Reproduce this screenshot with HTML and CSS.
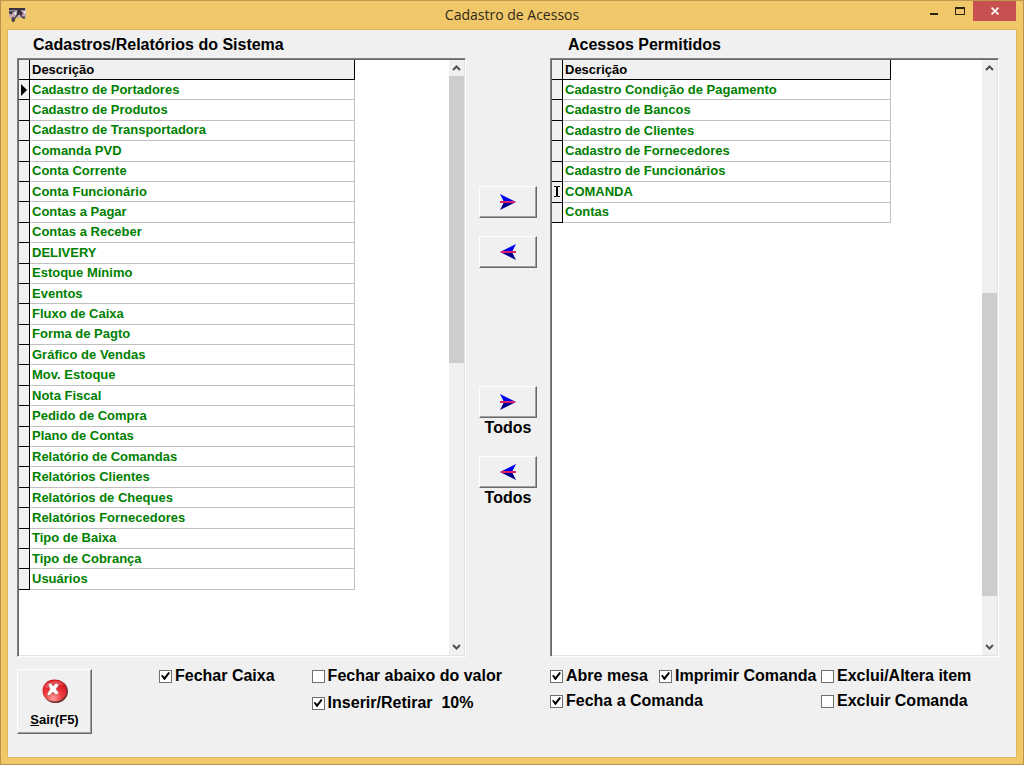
FILE: index.html
```html
<!DOCTYPE html>
<html lang="pt-BR">
<head>
<meta charset="utf-8">
<meta name="viewport" content="width=device-width, initial-scale=1">
<title>Cadastro de Acessos</title>
<link rel="stylesheet" href="styles.css">
</head>
<body>
<div class="window">
  <header class="titlebar">
    <svg class="app-icon" viewBox="0 0 16 13" aria-hidden="true">
      <path fill="#b9adb0" d="M0 0h16v9H0z"/>
      <path fill="#3c3040" d="M0 0h15v2H0zM0 3h5v1H3v2H1V5H0zM8 2h3l2 3 1 4h-2l-2-3-2 1-2 3H5l2-4z"/>
      <path fill="#d9a3b0" d="M1 6h3v3H1zM12 6h3v2h-3z"/>
      <path fill="#e9edf4" d="M5 4h2v2H5zM14 3h2v2h-2z"/>
      <path fill="#4b4348" d="M2 10l2-2 2 2-1 3H3zM13 8h2v2h-2z"/>
    </svg>
    <h1 class="title">Cadastro de Acessos</h1>
    <div class="window-buttons">
      <button class="win-btn" type="button" aria-label="Minimizar"><svg width="8" height="12" viewBox="0 0 8 12"><path fill="#2b210f" d="M0 8h8v2H0z"/></svg></button>
      <button class="win-btn" type="button" aria-label="Maximizar"><svg width="10" height="12" viewBox="0 0 10 12"><path fill="#2b210f" fill-rule="evenodd" d="M0 2h10v8H0zM1 4v5h8V4z"/></svg></button>
      <button class="win-btn close" type="button" aria-label="Fechar"><svg width="8" height="8" viewBox="0 0 8 8"><path stroke="#fff" stroke-width="1.7" d="M.6.6l6.8 6.8M7.4.6L.6 7.4"/></svg></button>
    </div>
  </header>

  <main class="content">
    <h2 class="heading">Cadastros/Relatórios do Sistema</h2>
    <h2 class="heading heading-right">Acessos Permitidos</h2>

    <section class="panel">
      <div class="list">
        <table class="grid grid-long">
          <thead><tr><th class="mark"></th><th scope="col">Descrição</th></tr></thead>
          <tbody>
            <tr><td class="mark"><svg width="6" height="12" viewBox="0 0 6 12"><path d="M0 0l6 6-6 6z"/></svg></td><td>Cadastro de Portadores</td></tr>
            <tr><td class="mark"></td><td>Cadastro de Produtos</td></tr>
            <tr><td class="mark"></td><td>Cadastro de Transportadora</td></tr>
            <tr><td class="mark"></td><td>Comanda PVD</td></tr>
            <tr><td class="mark"></td><td>Conta Corrente</td></tr>
            <tr><td class="mark"></td><td>Conta Funcionário</td></tr>
            <tr><td class="mark"></td><td>Contas a Pagar</td></tr>
            <tr><td class="mark"></td><td>Contas a Receber</td></tr>
            <tr><td class="mark"></td><td>DELIVERY</td></tr>
            <tr><td class="mark"></td><td>Estoque Mínimo</td></tr>
            <tr><td class="mark"></td><td>Eventos</td></tr>
            <tr><td class="mark"></td><td>Fluxo de Caixa</td></tr>
            <tr><td class="mark"></td><td>Forma de Pagto</td></tr>
            <tr><td class="mark"></td><td>Gráfico de Vendas</td></tr>
            <tr><td class="mark"></td><td>Mov. Estoque</td></tr>
            <tr><td class="mark"></td><td>Nota Fiscal</td></tr>
            <tr><td class="mark"></td><td>Pedido de Compra</td></tr>
            <tr><td class="mark"></td><td>Plano de Contas</td></tr>
            <tr><td class="mark"></td><td>Relatório de Comandas</td></tr>
            <tr><td class="mark"></td><td>Relatórios Clientes</td></tr>
            <tr><td class="mark"></td><td>Relatórios de Cheques</td></tr>
            <tr><td class="mark"></td><td>Relatórios Fornecedores</td></tr>
            <tr><td class="mark"></td><td>Tipo de Baixa</td></tr>
            <tr><td class="mark"></td><td>Tipo de Cobrança</td></tr>
            <tr><td class="mark"></td><td>Usuários</td></tr>
          </tbody>
        </table>
      </div>
      <div class="scrollbar">
        <button class="scroll-btn" type="button" aria-label="Rolar para cima"><svg width="9" height="6" viewBox="0 0 9 6"><path d="M1 5l3.500-3.500L8 5"/></svg></button>
        <div class="track"><span class="thumb" style="flex-grow:287"></span><span style="flex-grow:276"></span></div>
        <button class="scroll-btn" type="button" aria-label="Rolar para baixo"><svg width="9" height="6" viewBox="0 0 9 6"><path d="M1 1l3.500 3.500L8 1"/></svg></button>
      </div>
    </section>

    <div class="transfer">
      <button class="move" type="button" aria-label="Adicionar"><svg class="arrow" viewBox="0 0 16 16"><path fill="#0000f0" d="M0 0l16 8H4z"/><path fill="#000090" d="M0 16l16-8H4z"/><path fill="#e0205c" d="M0 7h15v2H0z"/></svg></button>
      <button class="move" type="button" aria-label="Remover"><svg class="arrow" viewBox="0 0 16 16"><path fill="#0000f0" d="M16 0L0 8h12z"/><path fill="#000090" d="M16 16L0 8h12z"/><path fill="#e0205c" d="M1 7h15v2H1z"/></svg></button>
      <div class="move-all move-all-first">
        <button class="move" type="button" aria-labelledby="all-add"><svg class="arrow" viewBox="0 0 16 16"><path fill="#0000f0" d="M0 0l16 8H4z"/><path fill="#000090" d="M0 16l16-8H4z"/><path fill="#e0205c" d="M0 7h15v2H0z"/></svg></button>
        <span id="all-add">Todos</span>
      </div>
      <div class="move-all">
        <button class="move" type="button" aria-labelledby="all-remove"><svg class="arrow" viewBox="0 0 16 16"><path fill="#0000f0" d="M16 0L0 8h12z"/><path fill="#000090" d="M16 16L0 8h12z"/><path fill="#e0205c" d="M1 7h15v2H1z"/></svg></button>
        <span id="all-remove">Todos</span>
      </div>
    </div>

    <section class="panel">
      <div class="list">
        <table class="grid grid-short">
          <thead><tr><th class="mark"></th><th scope="col">Descrição</th></tr></thead>
          <tbody>
            <tr><td class="mark"></td><td>Cadastro Condição de Pagamento</td></tr>
            <tr><td class="mark"></td><td>Cadastro de Bancos</td></tr>
            <tr><td class="mark"></td><td>Cadastro de Clientes</td></tr>
            <tr><td class="mark"></td><td>Cadastro de Fornecedores</td></tr>
            <tr><td class="mark"></td><td>Cadastro de Funcionários</td></tr>
            <tr><td class="mark"><svg width="6" height="11" viewBox="0 0 6 11"><path d="M0 0h2l1 .5L4 0h2v1H4v9h2v1H4l-1-.5-1 .5H0v-1h2V1H0z"/></svg></td><td>COMANDA</td></tr>
            <tr><td class="mark"></td><td>Contas</td></tr>
          </tbody>
        </table>
      </div>
      <div class="scrollbar">
        <button class="scroll-btn" type="button" aria-label="Rolar para cima"><svg width="9" height="6" viewBox="0 0 9 6"><path d="M1 5l3.500-3.500L8 5"/></svg></button>
        <div class="track"><span style="flex-grow:217"></span><span class="thumb" style="flex-grow:303"></span><span style="flex-grow:43"></span></div>
        <button class="scroll-btn" type="button" aria-label="Rolar para baixo"><svg width="9" height="6" viewBox="0 0 9 6"><path d="M1 1l3.500 3.500L8 1"/></svg></button>
      </div>
    </section>

    <div class="footer-left">
      <button class="exit" type="button">
        <svg width="26" height="24" viewBox="0 0 26 24" aria-hidden="true">
          <defs><radialGradient id="red" cx="45%" cy="85%" r="85%"><stop offset="0" stop-color="#ff9a98"/><stop offset=".45" stop-color="#ee3a3e"/><stop offset="1" stop-color="#c80d18"/></radialGradient></defs>
          <ellipse cx="13.500" cy="12.500" rx="12.500" ry="11.500" fill="#6e3434"/>
          <ellipse cx="12.500" cy="11.500" rx="12" ry="11" fill="url(#red)"/>
          <path d="M2 8C5 1 18-1 22 6c-5-2-9 6-20 2z" fill="#ff7d7d" opacity=".5"/>
          <path d="M6 5l3-1 2 3 3-3 3 2-3 4 3 4-3 2-3-3-4 4-2-2 3-5z" fill="#fff" stroke="#b05050" stroke-width=".6"/>
        </svg>
        <span><u>S</u>air(F5)</span>
      </button>
      <label class="check"><input type="checkbox" checked>Fechar Caixa</label>
      <div class="check-stack">
        <label class="check"><input type="checkbox">Fechar abaixo do valor</label>
        <label class="check"><input type="checkbox" checked>Inserir/Retirar&nbsp; 10%</label>
      </div>
    </div>
    <div class="footer-right">
      <label class="check"><input type="checkbox" checked>Abre mesa</label>
      <label class="check"><input type="checkbox" checked>Imprimir Comanda</label>
      <label class="check"><input type="checkbox">Exclui/Altera item</label>
      <label class="check check-wide"><input type="checkbox" checked>Fecha a Comanda</label>
      <label class="check"><input type="checkbox">Excluir Comanda</label>
    </div>
  </main>
</div>
</body>
</html>
```
FILE: styles.css
```css
* { box-sizing: border-box; }

body {
  margin: 0;
  font: bold 16px/20px "Liberation Sans", Arial, sans-serif;
  color: #000;
}

button {
  font: inherit;
  color: inherit;
  padding: 0;
  border: 0;
  background: none;
}

.window {
  display: flex;
  flex-direction: column;
  min-height: 100vh;
  padding: 0 7px 7px 7px;
  background: #f0c869;
  border: 1px solid #b8954a;
  border-top-color: #c09a4c;
}

.titlebar {
  display: grid;
  grid-template-columns: 1fr auto 1fr;
  height: 29px;
}

.app-icon { width: 17px; height: 14px; margin: 7px 0 0 1px; }

.title {
  margin: 0;
  padding-top: 4px;
  font: 14px/20px "Open Sans", "Noto Sans", sans-serif;
  color: #30281a;
}

.window-buttons {
  display: flex;
  justify-content: flex-end;
  align-items: flex-start;
}

.win-btn {
  display: grid;
  place-items: center;
  width: 26px;
  height: 20px;
}

.win-btn.close { width: 43px; background: #c75050; }

.content {
  flex: 1;
  display: grid;
  grid-template-columns: 1fr 84px 1fr;
  grid-template-rows: 28px 1fr 100px;
  padding: 0 17px 0 9px;
  background: #f0f0f0;
  box-shadow: 0 0 0 1px #dfb75f;
}

.heading {
  margin: 0;
  padding: 5px 0 0 16px;
  font-size: 16px;
  line-height: 20px;
}

.heading-right { grid-column: 3; padding-left: 18px; }

.panel {
  display: flex;
  min-width: 0;
  background: #fff;
  border: 1px solid;
  border-color: #808080 #fff #fff #808080;
  box-shadow: inset 1px 1px #696969, inset -1px -1px #e3e3e3;
  padding: 1px;
}

.list { flex: 1; min-width: 0; }

.grid {
  width: 336px;
  max-width: 100%;
  table-layout: fixed;
  border-collapse: separate;
  border-spacing: 0;
  font-size: 13px;
  line-height: 16px;
}

.grid-long { height: 530px; }
.grid-short { height: 163px; }
.panel .grid-short { width: 339px; }

.grid th,
.grid td {
  padding: 0 2px;
  text-align: left;
  border-right: 1px solid #c0c0c0;
  border-bottom: 1px solid #c0c0c0;
  color: #008000;
}

.grid th {
  height: 20px;
  font-size: 13px;
  color: #000;
  background: #f0f0f0;
  border-right-color: #000;
  border-bottom-color: #000;
}

.grid .mark {
  width: 11px;
  padding: 0;
  background: #f0f0f0;
  border-color: #000;
}

.mark svg { display: block; margin: 0 auto; }

.scrollbar {
  display: flex;
  flex-direction: column;
  width: 15px;
  background: #f0f0f0;
}

.scroll-btn { display: grid; place-items: center; height: 16px; }
.scroll-btn path { fill: none; stroke: #505050; stroke-width: 2; }

.track { flex: 1; display: flex; flex-direction: column; }
.thumb { background: #cdcdcd; }

.transfer {
  display: flex;
  flex-direction: column;
  align-items: center;
  gap: 18px;
  padding-top: 128px;
}

.move {
  display: grid;
  place-items: center;
  width: 58px;
  height: 32px;
}

.move,
.exit {
  background: #f0f0f0;
  border: 1px solid;
  border-color: #fff #696969 #696969 #fff;
  box-shadow: inset -1px -1px #a0a0a0;
}

.arrow { width: 16px; height: 16px; }

.move-all { display: flex; flex-direction: column; align-items: center; }
.move-all-first { margin-top: 100px; }

.footer-left {
  grid-column: 1 / 3;
  display: flex;
  align-items: flex-start;
  padding-top: 12px;
}

.exit {
  display: flex;
  flex-direction: column;
  align-items: center;
  gap: 8px;
  width: 75px;
  height: 65px;
  padding-top: 9px;
  font-size: 13px;
  line-height: 18px;
}

.footer-left > .check { margin: -3px 37px 0 67px; }

.check-stack {
  display: flex;
  flex-direction: column;
  gap: 7px;
  margin-top: -3px;
}

.footer-right {
  display: grid;
  grid-template-columns: 109px 162px 1fr;
  align-content: start;
  gap: 5px 0;
  padding-top: 9px;
}

.check-wide { grid-column: 1 / 3; }

.check {
  display: flex;
  align-items: center;
  gap: 3px;
  white-space: nowrap;
}

.check input {
  appearance: none;
  display: grid;
  place-items: center;
  flex: none;
  width: 13px;
  height: 13px;
  margin: 0;
  background: #fff;
  border: 1px solid #707070;
}

.check input:checked::before {
  content: "";
  width: 9px;
  height: 9px;
  background: #000;
  clip-path: polygon(0 45%, 18% 38%, 38% 62%, 82% 5%, 100% 18%, 42% 95%, 34% 95%);
}
```
